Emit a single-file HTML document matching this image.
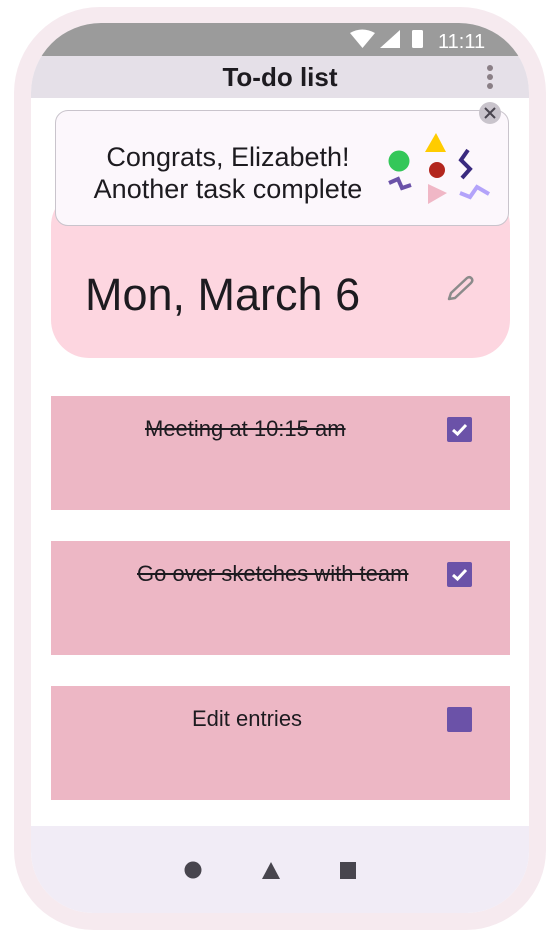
<!DOCTYPE html>
<html><head><style>
*{margin:0;padding:0;box-sizing:border-box}
body{width:560px;height:937px;background:#fff;font-family:"Liberation Sans",Roboto,sans-serif;position:relative;overflow:hidden}
.frame{position:absolute;left:14px;top:7px;width:532px;height:923px;border-radius:86px 86px 80px 80px;background:#f6eaef}
.screen{position:absolute;left:31px;top:23px;width:498px;height:890px;border-radius:70px 70px 62px 62px;overflow:hidden;background:#fff}
.status{position:absolute;left:0;top:0;width:100%;height:33px;background:#9b9b9b}
.appbar{position:absolute;left:0;top:33px;width:100%;height:42px;background:#e5e0e8;text-align:center;font-size:26px;font-weight:bold;line-height:42px;color:#1d1b20}
.nav{position:absolute;left:0;top:803px;width:100%;height:87px;background:#f1ecf6}
.date{position:absolute;left:20px;top:165px;width:459px;height:170px;background:#fdd6e0;border-radius:38px}
.toast{position:absolute;left:24px;top:87px;width:454px;height:116px;background:#fcf7fc;border:1px solid #c9c4cc;border-radius:13px}
.task{position:absolute;left:20px;width:459px;height:114px;background:#edb7c5}
.task span{position:absolute;top:20px;font-size:22px;color:#1d1b20}
.cb{position:absolute;left:396px;top:21px;width:25px;height:25px;background:#6b52a8;border-radius:2px}
</style></head><body>
<div class="frame"></div>
<div class="screen">
 <div class="status">
  <svg style="position:absolute;left:319px;top:6px" width="170" height="24">
   <path d="M0 4 Q12 -3 25 4 L12.5 19 Z" fill="#fff"/>
   <path d="M30 19 L50 1 L50 19 Z" fill="#fff"/>
   <rect x="62" y="1" width="11" height="18" rx="1.5" fill="#fff"/>
   <text x="88" y="19" font-family="Liberation Sans" font-size="20" fill="#fff">11:11</text>
  </svg>
 </div>
 <div class="appbar">To-do list
  <svg style="position:absolute;left:455px;top:8px" width="8" height="26"><circle cx="4" cy="4" r="3" fill="#8a7f86"/><circle cx="4" cy="13" r="3" fill="#8a7f86"/><circle cx="4" cy="22" r="3" fill="#8a7f86"/></svg>
 </div>
 <div class="date">
  <div style="position:absolute;left:34px;top:81px;font-size:45px;color:#1d1b20">Mon, March 6</div>
  <svg style="position:absolute;left:394px;top:87px" width="30" height="30"><path d="M4 24 L6 18 L22 3 Q25 1 27 4 Q28 6 26 8 L10 23 Z" fill="none" stroke="#8b8b8b" stroke-width="2.5" stroke-linejoin="round"/></svg>
 </div>
 <div class="toast">
  <div style="position:absolute;left:2px;top:30px;width:340px;text-align:center;font-size:27px;line-height:32px;color:#1d1b20">Congrats, Elizabeth!<br>Another task complete</div>
  <svg style="position:absolute;left:330px;top:20px" width="120" height="80">
   <circle cx="13" cy="30" r="10.5" fill="#34c759"/>
   <path d="M39 21 L60 21 L50 2 Z" fill="#ffcc00"/>
   <circle cx="51" cy="39" r="8" fill="#b3261e"/>
   <path d="M82 19 L75 29 L84 38 L76 47" fill="none" stroke="#3a2a7f" stroke-width="4"/>
   <path d="M3 52 L12 48 L16 57 L25 54" fill="none" stroke="#6b52a8" stroke-width="4"/>
   <path d="M42 53 L61 62 L42 73 Z" fill="#f0b7c6"/>
   <path d="M74 62 L84 66 L91 56 L103 63" fill="none" stroke="#b3a3fa" stroke-width="4"/>
  </svg>
  <svg style="position:absolute;left:422px;top:-10px" width="24" height="24"><circle cx="12" cy="12" r="11" fill="#c9c4cc"/><path d="M7 7 L17 17 M17 7 L7 17" stroke="#49454f" stroke-width="2"/></svg>
 </div>
 <div class="task" style="top:373px"><span style="left:94px;text-decoration:line-through">Meeting at 10:15 am</span><div class="cb"><svg width="25" height="25"><path d="M6 13 L10.5 17 L19 8" fill="none" stroke="#fff" stroke-width="3"/></svg></div></div>
 <div class="task" style="top:518px"><span style="left:86px;text-decoration:line-through">Go over sketches with team</span><div class="cb"><svg width="25" height="25"><path d="M6 13 L10.5 17 L19 8" fill="none" stroke="#fff" stroke-width="3"/></svg></div></div>
 <div class="task" style="top:663px"><span style="left:141px">Edit entries</span><div class="cb"></div></div>
 <div class="nav">
  <svg style="position:absolute;left:150px;top:34px" width="200" height="20">
   <circle cx="12" cy="10" r="8.5" fill="#48454e"/>
   <path d="M81 19 L99 19 L90 2 Z" fill="#48454e"/>
   <rect x="159" y="2" width="16" height="17" fill="#48454e"/>
  </svg>
 </div>
</div>
</body></html>
